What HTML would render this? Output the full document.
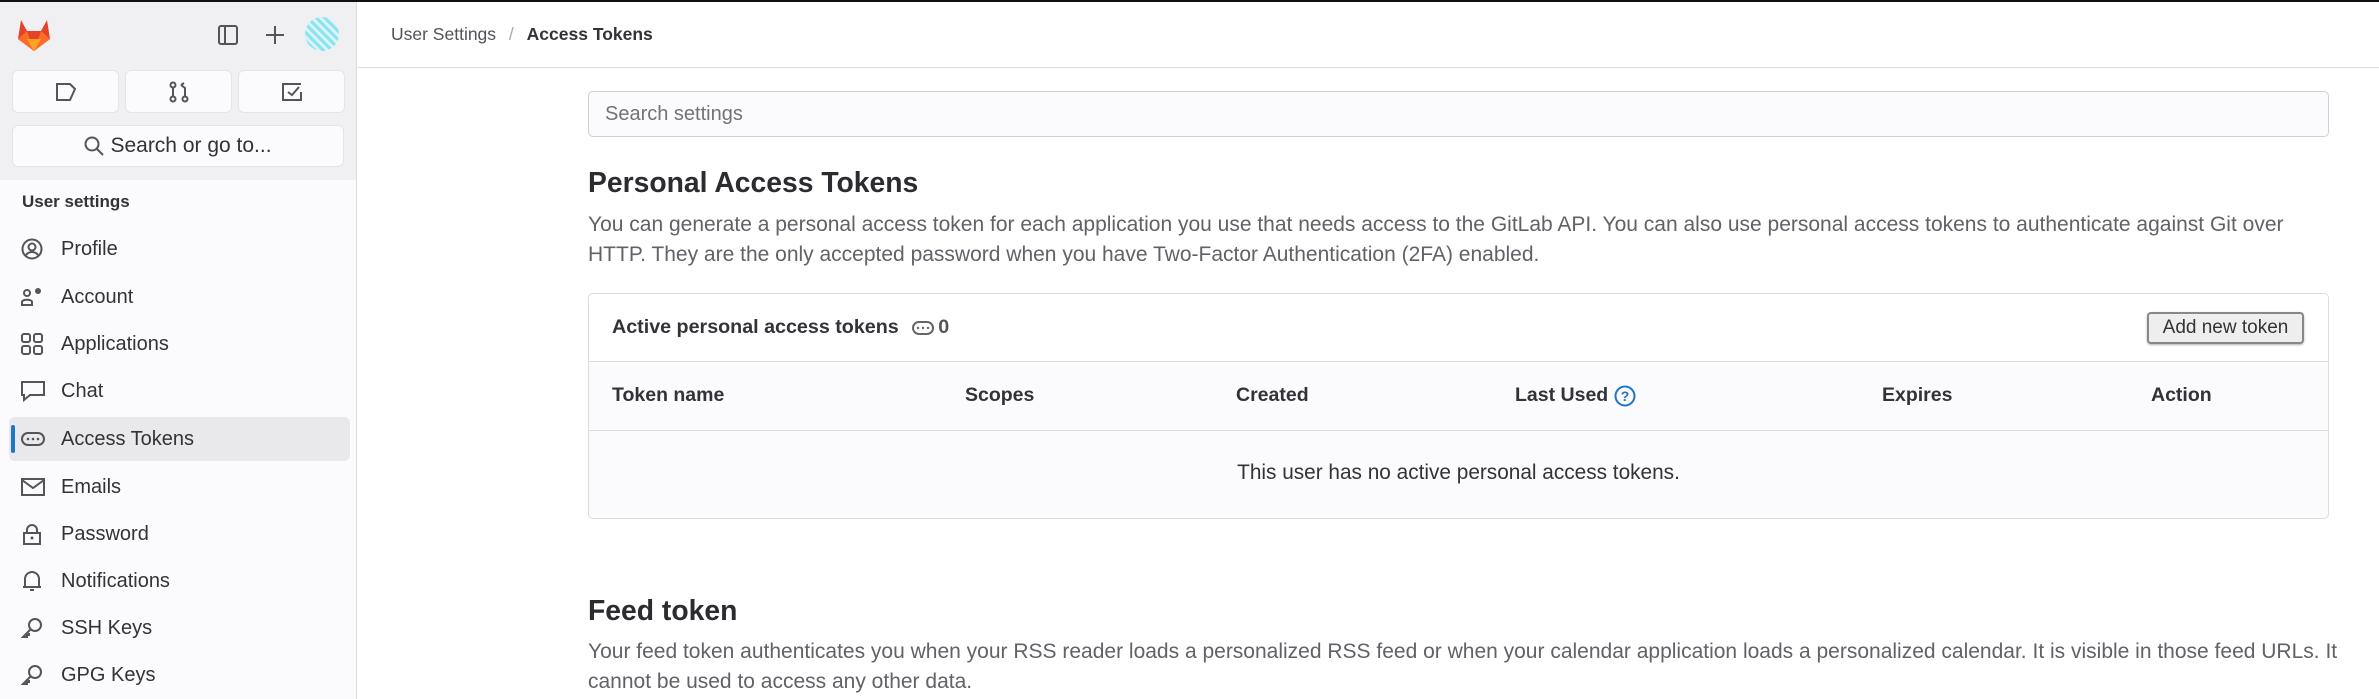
<!DOCTYPE html>
<html><head><meta charset="utf-8"><style>
*{box-sizing:border-box;margin:0;padding:0}
body{width:2379px;height:699px;overflow:hidden;background:#fff;font-family:"Liberation Sans",sans-serif;color:#333238;position:relative}
.topline{position:absolute;left:0;top:0;width:2379px;height:2px;background:#111}
.side{position:absolute;left:0;top:2px;width:357px;height:697px;background:#fbfafd;border-right:1px solid #dcdcde}
.sidetop{position:absolute;left:0;top:0;width:356px;height:178px;background:#f0f0f2}
.btn3{position:absolute;top:68px;height:43px;width:107px;background:#fbfafd;border:1px solid #e4e4e8;border-radius:6px}
.search{position:absolute;left:12px;top:123px;width:332px;height:42px;background:#fbfafd;border:1px solid #e4e4e8;border-radius:6px;font-size:21px;color:#333;text-align:center;line-height:40px}
.hdr{position:absolute;left:22px;top:190px;font-size:17px;font-weight:bold;color:#333238}
.item{position:absolute;left:9px;width:341px;height:44px;font-size:20px;line-height:44px;padding-left:52px;color:#333238}
.item svg{position:absolute;left:12px;top:11px}
.active{background:#e9e9ec;border-radius:6px}
.active:before{content:"";position:absolute;left:2px;top:8px;width:4px;height:28px;background:#1f75cb;border-radius:2px}
.bc{position:absolute;left:358px;top:2px;width:2021px;height:66px;border-bottom:1px solid #dcdcde;font-size:17.5px;line-height:64px;padding-left:33px;color:#535158}
.ss{position:absolute;left:588px;top:91px;width:1741px;height:46px;border:1px solid #d0d0d4;border-radius:5px;background:#fbfafd;font-size:20px;color:#737278;line-height:44px;padding-left:16px}
h2{position:absolute;left:588px;font-size:28.3px;font-weight:bold;color:#2c2b30}
p.d{position:absolute;left:588px;width:1712px;font-size:21px;line-height:30px;color:#626168}
.card{position:absolute;left:588px;top:293px;width:1741px;height:226px;border:1px solid #dcdcde;border-radius:5px;background:#fbfafd;overflow:hidden}
.ch{height:68px;background:#fff;border-bottom:1px solid #dcdcde;position:relative;font-size:19.7px;font-weight:bold;line-height:66px;padding-left:23px;color:#333238}
.th{height:69px;border-bottom:1px solid #dcdcde;position:relative;font-size:19.5px;font-weight:bold;color:#333238}
.th span{position:absolute;top:22px;display:flex;align-items:center;gap:6px}
.empty{text-align:center;font-size:20.8px;color:#333238;padding-top:30px}
.addb{position:absolute;left:1558px;top:18px;width:157px;height:32px;border:2px solid #888;border-radius:4px;background:#eee;font-size:19px;font-weight:normal;line-height:28px;text-align:center;color:#333;box-shadow:0 1px 2px rgba(0,0,0,.3)}
</style></head><body>
<div class="topline"></div>
<div class="side">
<div class="sidetop"></div>
<svg style="position:absolute;left:16px;top:16px" width="36" height="34" viewBox="0 0 36 34"><path d="M18 33 L2 21 L5 2 L11 13 L25 13 L31 2 L34 21 Z" fill="#e24329"/><path d="M18 33 L2 21 L11 13Z" fill="#fc6d26"/><path d="M18 33 L34 21 L25 13Z" fill="#fc6d26"/><path d="M18 33 L11 21 L25 21Z" fill="#fca326"/></svg>
<svg style="position:absolute;left:218px;top:23px" width="20" height="20" viewBox="0 0 20 20"><rect x="1" y="1" width="18" height="18" rx="2" fill="none" stroke="#555" stroke-width="2"/><line x1="7" y1="1" x2="7" y2="19" stroke="#555" stroke-width="2"/></svg>
<svg style="position:absolute;left:266px;top:24px" width="18" height="18"><path d="M9 0v18M0 9h18" stroke="#555" stroke-width="2"/></svg>
<div style="position:absolute;left:305px;top:15px;width:34px;height:34px;border-radius:50%;background:repeating-linear-gradient(45deg,#8fe3f0 0 3px,#d8f6fa 3px 6px)"></div>
<div class="btn3" style="left:12px"><svg style="position:absolute;left:42px;top:11px" width="22" height="20"><path d="M2 2h13l5 5-5 11H2z" fill="none" stroke="#555" stroke-width="2"/></svg></div>
<div class="btn3" style="left:125px"><svg style="position:absolute;left:42px;top:10px" width="22" height="22"><circle cx="5" cy="18" r="2.5" fill="none" stroke="#555" stroke-width="2"/><circle cx="5" cy="4" r="2.5" fill="none" stroke="#555" stroke-width="2"/><circle cx="17" cy="18" r="2.5" fill="none" stroke="#555" stroke-width="2"/><path d="M5 6v10M17 15V7l-4-3M13 4l3-2" fill="none" stroke="#555" stroke-width="2"/></svg></div>
<div class="btn3" style="left:238px"><svg style="position:absolute;left:42px;top:11px" width="22" height="20"><path d="M20 2H2v16h18V10" fill="none" stroke="#555" stroke-width="2"/><path d="M7 10l4 3 7-8" fill="none" stroke="#555" stroke-width="2"/></svg></div>
<div class="search"><svg style="vertical-align:middle;margin-right:6px" width="20" height="20"><circle cx="8" cy="8" r="6.5" fill="none" stroke="#555" stroke-width="2"/><path d="M13 13l6 6" stroke="#555" stroke-width="2"/></svg>Search or go to...</div>
<div class="hdr">User settings</div>
<div class="item" style="top:225px"><svg width="22" height="22"><circle cx="11" cy="11" r="9.5" fill="none" stroke="#555" stroke-width="2"/><circle cx="11" cy="9" r="3.5" fill="none" stroke="#555" stroke-width="2"/><path d="M5 17c3-4 9-4 12 0" fill="none" stroke="#555" stroke-width="2"/></svg>Profile</div>
<div class="item" style="top:273px"><svg width="22" height="22"><circle cx="6" cy="7" r="3" fill="none" stroke="#555" stroke-width="2"/><path d="M1 19v-3c0-3 10-3 10 0v3z" fill="none" stroke="#555" stroke-width="2"/><circle cx="17" cy="5" r="3" fill="#555"/></svg>Account</div>
<div class="item" style="top:320px"><svg width="22" height="22"><rect x="1" y="1" width="8" height="8" rx="2" fill="none" stroke="#555" stroke-width="2"/><rect x="13" y="1" width="8" height="8" rx="2" fill="none" stroke="#555" stroke-width="2"/><rect x="1" y="13" width="8" height="8" rx="2" fill="none" stroke="#555" stroke-width="2"/><rect x="13" y="13" width="8" height="8" rx="2" fill="none" stroke="#555" stroke-width="2"/></svg>Applications</div>
<div class="item" style="top:367px"><svg width="24" height="22"><path d="M1 2h22v13H9l-6 5v-5H1z" fill="none" stroke="#555" stroke-width="2"/></svg>Chat</div>
<div class="item active" style="top:415px"><svg width="24" height="22"><rect x="1" y="5" width="22" height="12" rx="6" fill="none" stroke="#555" stroke-width="2"/><circle cx="7" cy="11" r="1.3" fill="#555"/><circle cx="12" cy="11" r="1.3" fill="#555"/><circle cx="17" cy="11" r="1.3" fill="#555"/></svg>Access Tokens</div>
<div class="item" style="top:463px"><svg width="24" height="22"><rect x="1" y="3" width="22" height="16" fill="none" stroke="#555" stroke-width="2"/><path d="M1 4l11 8 11-8" fill="none" stroke="#555" stroke-width="2"/></svg>Emails</div>
<div class="item" style="top:510px"><svg width="22" height="22"><rect x="3" y="10" width="16" height="11" fill="none" stroke="#555" stroke-width="2"/><path d="M6 10V7a5 5 0 0110 0v3" fill="none" stroke="#555" stroke-width="2"/><circle cx="11" cy="15" r="1.5" fill="#555"/></svg>Password</div>
<div class="item" style="top:557px"><svg width="22" height="22"><path d="M4 17V9a7 7 0 0114 0v8h2H2z" fill="none" stroke="#555" stroke-width="2"/><path d="M9 20h4" stroke="#555" stroke-width="2"/></svg>Notifications</div>
<div class="item" style="top:604px"><svg width="22" height="22"><circle cx="14" cy="8" r="6" fill="none" stroke="#555" stroke-width="2"/><path d="M10 12l-8 8h4v-2h2v-2" fill="none" stroke="#555" stroke-width="2"/></svg>SSH Keys</div>
<div class="item" style="top:651px"><svg width="22" height="22"><circle cx="14" cy="8" r="6" fill="none" stroke="#555" stroke-width="2"/><path d="M10 12l-8 8h4v-2h2v-2" fill="none" stroke="#555" stroke-width="2"/></svg>GPG Keys</div>
</div>
<div class="bc">User Settings <span style="color:#aaa;margin:0 8px">/</span> <b style="color:#333238">Access Tokens</b></div>
<div class="ss">Search settings</div>
<h2 style="top:166px">Personal Access Tokens</h2>
<p class="d" style="top:210px">You can generate a personal access token for each application you use that needs access to the GitLab API. You can also use personal access tokens to authenticate against Git over HTTP. They are the only accepted password when you have Two-Factor Authentication (2FA) enabled.</p>
<div class="card">
<div class="ch">Active personal access tokens <svg style="vertical-align:middle;margin:0 4px 0 8px" width="22" height="14"><rect x="1" y="1" width="20" height="12" rx="6" fill="none" stroke="#666" stroke-width="2"/><circle cx="6" cy="7" r="1.2" fill="#666"/><circle cx="11" cy="7" r="1.2" fill="#666"/><circle cx="16" cy="7" r="1.2" fill="#666"/></svg><span style="color:#555">0</span>
<div class="addb">Add new token</div></div>
<div class="th"><span style="left:23px">Token name</span><span style="left:376px">Scopes</span><span style="left:647px">Created</span><span style="left:926px">Last Used <svg width="22" height="22"><circle cx="11" cy="11" r="9.5" fill="none" stroke="#1f75cb" stroke-width="2"/><text x="11" y="16" font-size="14" text-anchor="middle" fill="#1f75cb" font-family="Liberation Sans" font-weight="bold">?</text></svg></span><span style="left:1293px">Expires</span><span style="left:1562px">Action</span></div>
<div class="empty">This user has no active personal access tokens.</div>
</div>
<h2 style="top:594px">Feed token</h2>
<p class="d" style="top:637px;width:1760px">Your feed token authenticates you when your RSS reader loads a personalized RSS feed or when your calendar application loads a personalized calendar. It is visible in those feed URLs. It cannot be used to access any other data.</p>
</body></html>
